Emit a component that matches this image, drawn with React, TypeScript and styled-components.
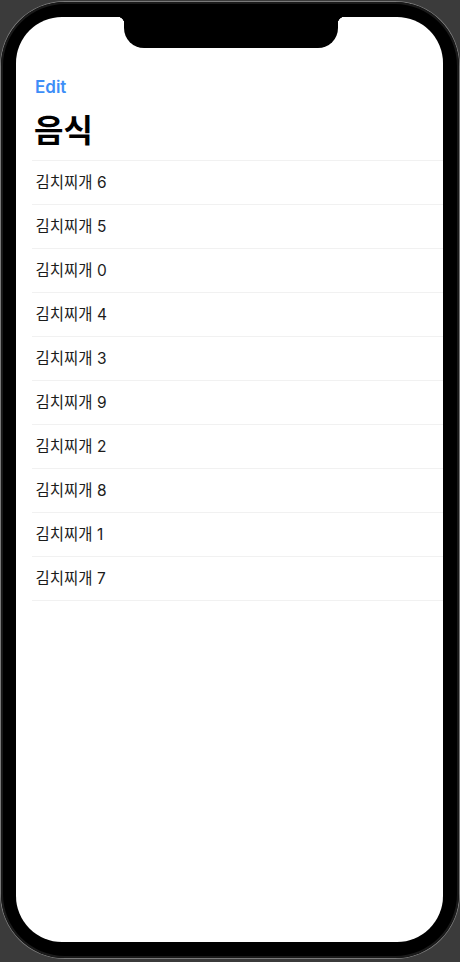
import React from "react";
import styled, { createGlobalStyle } from "styled-components";

const GlobalStyle = createGlobalStyle`
  html, body {
    margin: 0;
    padding: 0;
    background: #3b3b3b;
    width: 460px;
    height: 962px;
    overflow: hidden;
  }
  * { box-sizing: border-box; }
`;

const Device = styled.div`
  position: relative;
  margin: 2px 0 0 1px;
  width: 458px;
  height: 956px;
  border-radius: 64px;
  background: #000;
  padding: 15px;
  box-shadow: 0 0 0 1px #7a7a7a, inset 0 0 0 2px #1a1a1a;
`;

const Screen = styled.div`
  position: relative;
  width: 427px;
  height: 925px;
  border-radius: 46px;
  background: #ffffff;
  overflow: hidden;
  padding-top: 48px;
  font-family: "Noto Sans CJK KR", "Noto Sans", sans-serif;
`;

const Notch = styled.div`
  position: absolute;
  top: 0;
  left: 108px;
  width: 214px;
  height: 31px;
  background: #000;
  border-radius: 0 0 20px 20px;

  &::before,
  &::after {
    content: "";
    position: absolute;
    top: 0;
    width: 7px;
    height: 7px;
  }
  &::before {
    left: -7px;
    background: radial-gradient(circle at 0 100%, transparent 7px, #000 7.5px);
  }
  &::after {
    right: -7px;
    background: radial-gradient(circle at 100% 100%, transparent 7px, #000 7.5px);
  }
`;

const NavBar = styled.div`
  height: 44px;
  display: flex;
  align-items: center;
  padding-left: 19px;
`;

const EditButton = styled.button`
  border: none;
  background: none;
  padding: 0;
  font-family: Inter, "Noto Sans", sans-serif;
  font-size: 17px;
  line-height: 22px;
  font-weight: 600;
  color: #3d8ef7;
  cursor: pointer;
`;

const Title = styled.h1`
  margin: -1px 0 0;
  padding: 0 0 12px 18px;
  font-family: "Noto Sans CJK KR", sans-serif;
  font-size: 32px;
  line-height: 40px;
  font-weight: 700;
  color: #000;
`;

const List = styled.ul`
  list-style: none;
  margin: 0 0 0 16px;
  padding: 0;
  border-bottom: 1px solid #f1f1f1;
`;

const Row = styled.li`
  height: 44px;
  border-top: 1px solid #f1f1f1;
  display: flex;
  align-items: center;
  padding: 0 0 3px 3.5px;
  font-family: Inter, "Noto Sans CJK KR", sans-serif;
  font-size: 15.5px;
  color: #1c1c1c;
`;

const items = [6, 5, 0, 4, 3, 9, 2, 8, 1, 7];

export default function App() {
  return (
    <>
      <GlobalStyle />
      <Device>
        <Screen>
          <Notch />
          <NavBar>
            <EditButton>Edit</EditButton>
          </NavBar>
          <Title>음식</Title>
          <List>
            {items.map((n) => (
              <Row key={n}>김치찌개 {n}</Row>
            ))}
          </List>
        </Screen>
      </Device>
    </>
  );
}
